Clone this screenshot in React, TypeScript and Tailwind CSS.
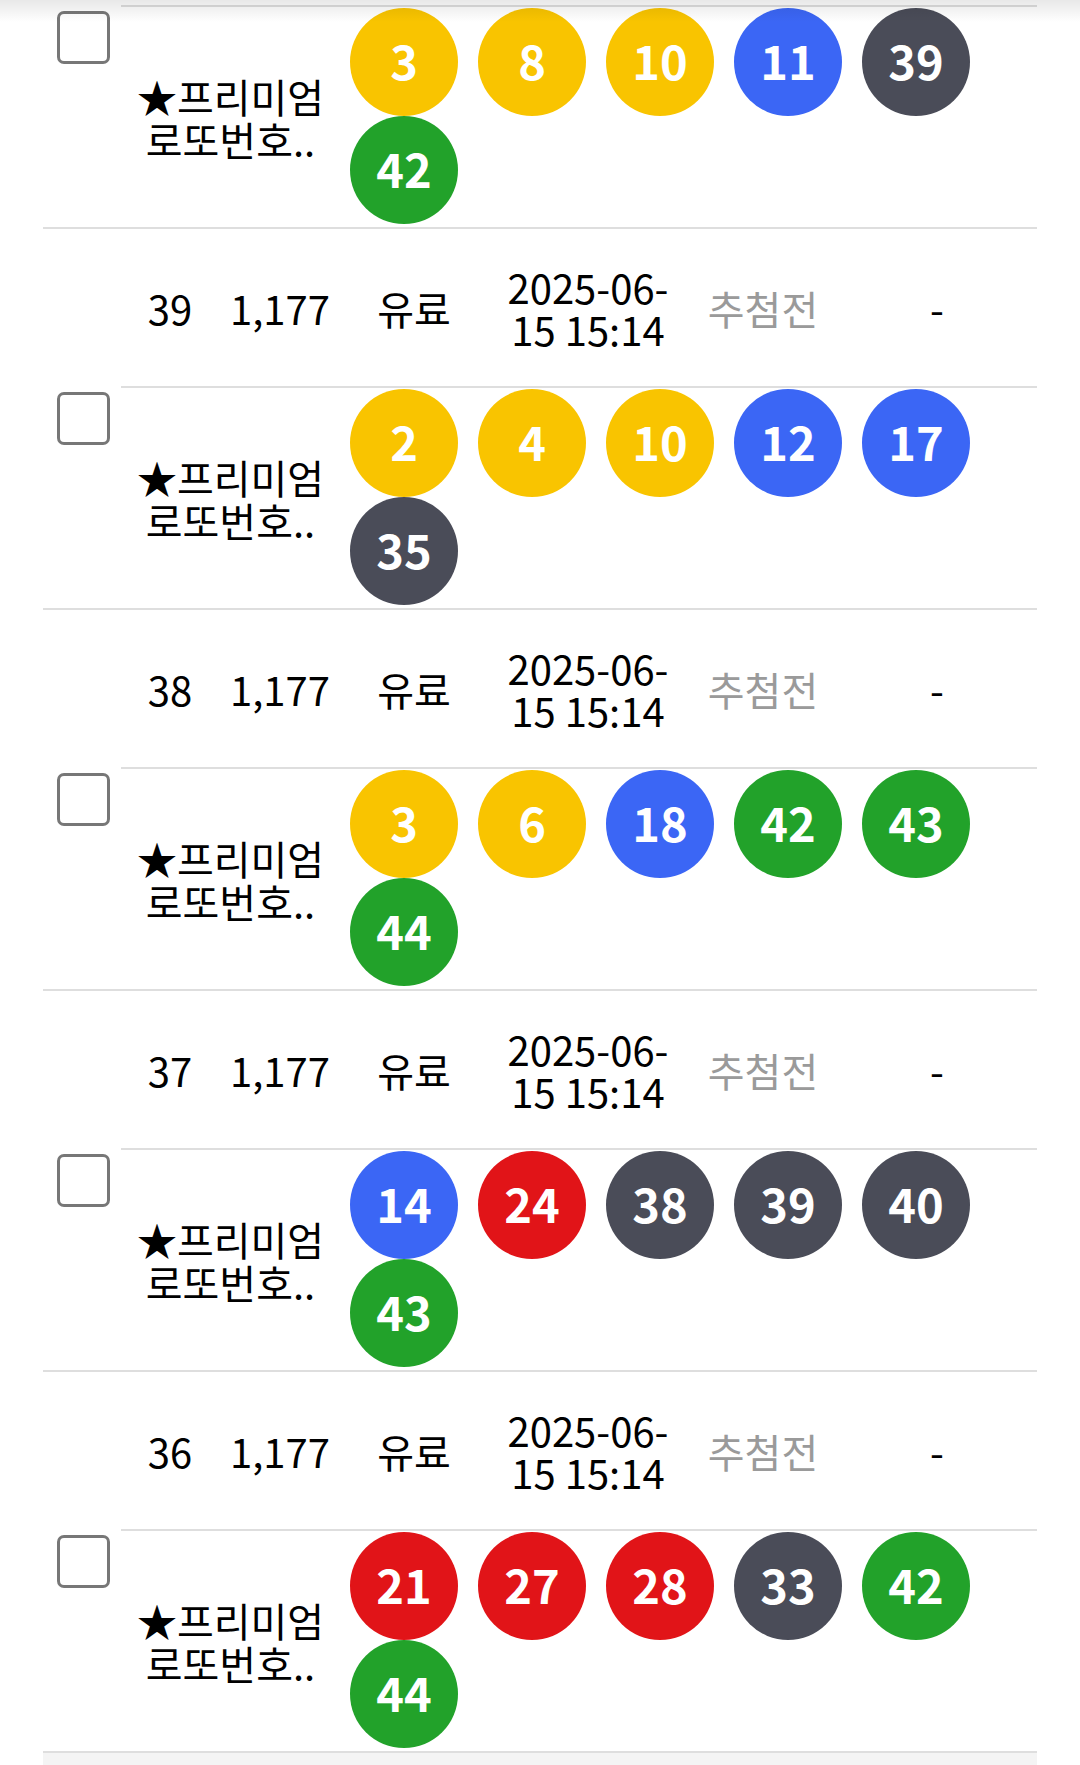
import React from "react";

type Group = { no: number; balls: number[]; hidden?: boolean };

const groups: Group[] = [
  { no: 40, balls: [3, 8, 10, 11, 39, 42], hidden: true },
  { no: 39, balls: [2, 4, 10, 12, 17, 35] },
  { no: 38, balls: [3, 6, 18, 42, 43, 44] },
  { no: 37, balls: [14, 24, 38, 39, 40, 43] },
  { no: 36, balls: [21, 27, 28, 33, 42, 44] },
];

function ballColor(n: number): string {
  if (n <= 10) return "bg-[#f9c400]";
  if (n <= 20) return "bg-[#3b66f5]";
  if (n <= 30) return "bg-[#e11418]";
  if (n <= 40) return "bg-[#4a4c58]";
  return "bg-[#22a22a]";
}

const FONT = { fontFamily: '"Noto Sans CJK KR", "Noto Sans", sans-serif' };

function Ball({ n }: { n: number }) {
  return (
    <div
      className={`mx-[10px] flex h-[108px] w-[108px] items-center justify-center rounded-full pb-[5px] text-[47px] font-bold leading-none text-white ${ballColor(n)}`}
    >
      {n}
    </div>
  );
}

function GroupRow({ g }: { g: Group }) {
  return (
    <div className="flex border-b-2 border-[#dedede]">
      <div className="flex w-[78px] shrink-0 items-center justify-center">
        <div className="ml-[3px] h-[53px] w-[53px] rounded-[7px] border-[3px] border-[#777777] bg-white" />
      </div>
      <div className="flex-1">
        {g.hidden ? (
          <div className="h-[157px]" />
        ) : (
          <div className="flex h-[157px] items-center text-[40px] leading-[42px] text-black">
            <div className="w-[98px] text-center">{g.no}</div>
            <div className="w-[122px] text-center">1,177</div>
            <div className="w-[146px] text-center">유료</div>
            <div className="w-[202px] text-center">
              2025-06-
              <br />
              15 15:14
            </div>
            <div className="w-[148px] text-center text-[#9a9a9a]">추첨전</div>
            <div className="w-[200px] text-center">-</div>
          </div>
        )}
        <div className="flex h-[222px] border-t-2 border-[#dedede] pt-[1px]">
          <div className="flex w-[219px] shrink-0 items-center justify-center text-center text-[40px] leading-[43px] text-black">
            <div>
              ★프리미엄
              <br />
              로또번호..
            </div>
          </div>
          <div className="flex flex-1 flex-wrap content-start">
            {g.balls.map((b, i) => (
              <Ball key={i} n={b} />
            ))}
          </div>
        </div>
      </div>
    </div>
  );
}

export default function App() {
  return (
    <div className="relative h-[1765px] w-[1080px] overflow-hidden bg-white" style={FONT}>
      <div className="-mt-[152px] px-[43px]">
        {groups.map((g) => (
          <GroupRow key={g.no} g={g} />
        ))}
        <div className="h-[40px] bg-[#f4f4f4]" />
      </div>
      <div className="pointer-events-none absolute inset-x-0 top-0 h-[22px] bg-gradient-to-b from-black/[0.09] to-transparent" />
    </div>
  );
}
